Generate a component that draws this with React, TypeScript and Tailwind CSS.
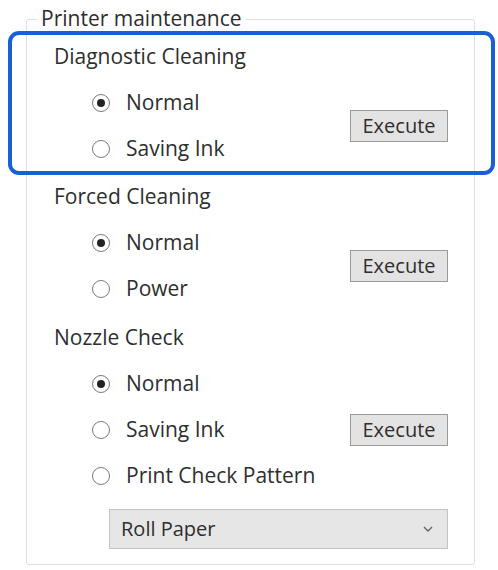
import { ReactNode } from "react";

const font = { fontFamily: '"Open Sans", "Noto Sans", sans-serif' };

function Radio({ label, checked }: { label: string; checked?: boolean }) {
  return (
    <div className="flex h-[46px] items-center pl-[38px]">
      <span className="flex h-[18px] w-[18px] items-center justify-center rounded-full border-[1.5px] border-[#7a7a7a] bg-white">
        {checked && <span className="h-[8px] w-[8px] rounded-full bg-[#222]" />}
      </span>
      <span className="ml-[16px] text-[21px] text-[#2e2e2e]">{label}</span>
    </div>
  );
}

function ExecuteButton() {
  return (
    <button className="flex h-[32px] w-[98px] items-center justify-center border-[1.5px] border-[#9a9a9a] bg-[#e3e3e3] text-[20px] text-[#2e2e2e]">
      Execute
    </button>
  );
}

function Section({ title, children, className }: { title: string; children: ReactNode; className?: string }) {
  return (
    <div className={className}>
      <div className="flex h-[46px] items-center text-[21px] text-[#2e2e2e]">{title}</div>
      <div className="flex items-center">
        <div className="flex flex-1 flex-col">{children}</div>
        <ExecuteButton />
      </div>
    </div>
  );
}

export default function App() {
  return (
    <div className="relative h-[570px] w-[498px] overflow-hidden bg-white" style={font}>
      <div className="pl-[26px] pt-[19px]">
        <div className="relative h-[546px] w-[449px] rounded-[3px] border border-[#dedede] pl-[27px] pr-[26px] pt-[14px]">
          <span className="absolute left-[10px] top-[-16px] bg-white px-[4px] text-[21px] leading-[28px] text-[#2e2e2e]">
            Printer maintenance
          </span>
          <Section title="Diagnostic Cleaning">
            <Radio label="Normal" checked />
            <Radio label="Saving Ink" />
          </Section>
          <Section title="Forced Cleaning" className="mt-[2px]">
            <Radio label="Normal" checked />
            <Radio label="Power" />
          </Section>
          <Section title="Nozzle Check" className="mt-[3px]">
            <Radio label="Normal" checked />
            <Radio label="Saving Ink" />
            <Radio label="Print Check Pattern" />
          </Section>
          <div className="ml-[55px] mt-[10px] flex h-[40px] items-center justify-between border border-[#c4c4c4] bg-[#e6e6e6] pl-[11px] pr-[14px] text-[20px] text-[#2e2e2e]">
            <span>Roll Paper</span>
            <svg width="10" height="6" viewBox="0 0 10 6" fill="none">
              <path d="M1 1l4 4 4-4" stroke="#666" strokeWidth="1.4" />
            </svg>
          </div>
        </div>
      </div>
      <div className="absolute left-[8px] top-[31px] h-[144px] w-[487px] rounded-[11px] border-[4px] border-[#1a5fd6]" />
    </div>
  );
}
